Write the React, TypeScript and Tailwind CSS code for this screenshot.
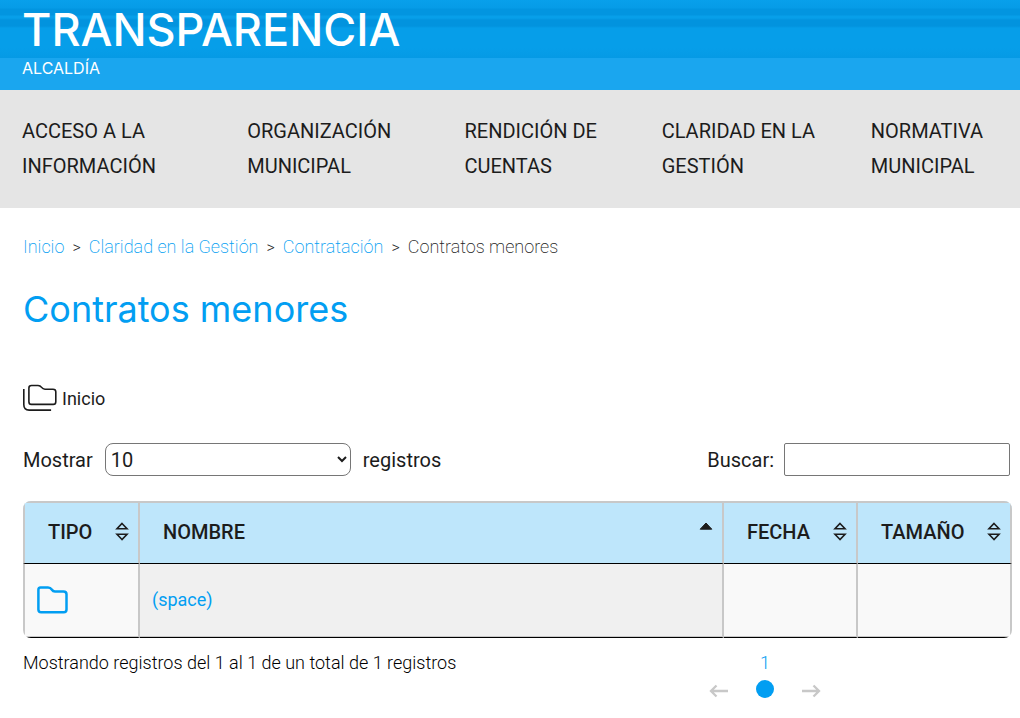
import type { ReactNode } from "react";

const NAV_ITEMS = [
  ["Acceso a la", "información"],
  ["Organización", "municipal"],
  ["Rendición de", "cuentas"],
  ["Claridad en la", "gestión"],
  ["Normativa", "municipal"],
];

const BREADCRUMBS = ["Inicio", "Claridad en la Gestión", "Contratación"];

function FolderIcon() {
  return (
    <svg width="31" height="28" viewBox="0 0 31 28" fill="none" stroke="#029ef2" strokeWidth="2.5">
      <path d="M3.500 1.500h7.500c2 0 2.800.6 3.700 2s1.800 2 3.300 2h8.500c2 0 3 1 3 2.800v15.200c0 1.800-1 2.800-2.800 2.800H4.200c-1.800 0-2.800-1-2.800-2.800V3.800c0-1.500.8-2.300 2.100-2.300z" />
    </svg>
  );
}

function FoldersIcon() {
  return (
    <svg width="35" height="28" viewBox="0 0 35 28" fill="none" stroke="#1c1c1c" strokeWidth="1.6">
      <path d="M8.500 1.500h6.500c2 0 2.600.5 3.600 1.900s1.800 1.800 3.400 1.800h8c1.800 0 2.800 1 2.800 2.600v9.900c0 1.800-1 2.700-2.600 2.700H8.400c-1.700 0-2.500-1-2.500-2.700V4c0-1.600 1-2.500 2.600-2.500z" />
      <path d="M.8 5v15.500c0 3.500 2 5.600 5.300 5.600h22" />
    </svg>
  );
}

function SortIcon({ active = false }: { active?: boolean }) {
  return (
    <svg width="16" height="20" viewBox="0 0 16 20" fill="none" stroke="#1c1c1c" strokeWidth="1.6">
      {active ? (
        <path d="M8 1L13.800 7.200H2.200z" fill="#1c1c1c" strokeWidth="1" />
      ) : (
        <>
          <path d="M8 1.500L13 6.700H3z" />
          <path d="M8 17.500L3 12.300h10z" />
        </>
      )}
    </svg>
  );
}

function ArrowIcon({ flip = false }: { flip?: boolean }) {
  return (
    <svg
      width="20"
      height="14"
      viewBox="0 0 20 14"
      fill="none"
      stroke="#c8c8c8"
      strokeWidth="2.3"
      className={flip ? "rotate-180" : ""}
    >
      <path d="M7.500 1.500L2 7l5.500 5.500M2 7h17" />
    </svg>
  );
}

function HeaderCell({ children, active }: { children: ReactNode; active?: boolean }) {
  return (
    <th
      scope="col"
      aria-sort={active ? "ascending" : "none"}
      className="h-[63px] border-t-2 border-r-2 border-b border-t-[#c8c8c8] border-r-[#c8c8c8] border-b-black bg-[#bee6fb] p-0 first:border-l-2 first:border-l-[#c8c8c8]"
    >
      <button className="flex w-full items-center justify-between pr-2 pb-[2px] pl-[23px] text-xl font-medium uppercase">
        {children}
        <SortIcon active={active} />
      </button>
    </th>
  );
}

export default function App() {
  return (
    <div className="min-h-screen bg-white font-['Roboto',sans-serif] text-[#1c1c1c]">
      {/* Header */}
      <header className="font-['Inter',sans-serif] text-white">
        <div className="bg-[linear-gradient(to_bottom,#08a0eb_0px,#069ce7_8px,#0295e0_9px,#0295e0_15px,#079fe9_16px,#079fe9_18px,#0293de_20px,#0293de_26px,#069ee9_28px,#069ee9_48px,#059ae5_58px)] px-[22px] pt-1 pb-[2px]">
          <h1 className="text-[45px] leading-[52px] font-medium">TRANSPARENCIA</h1>
        </div>
        <p className="bg-[#1aa6ef] px-[22px] pb-3 text-base leading-5">ALCALDÍA</p>
      </header>

      {/* Navigation */}
      <nav className="bg-[#e5e5e5] pt-6 pb-6 pl-[22px]">
        <ul className="grid grid-cols-[225fr_217fr_197fr_209fr_149fr] text-xl leading-[35px]">
          {NAV_ITEMS.map(([first, second]) => (
            <li key={first}>
              <a href="#" className="block uppercase">
                {first}
                <br />
                {second}
              </a>
            </li>
          ))}
        </ul>
      </nav>

      <main className="pr-2 pl-[23px]">
        {/* Breadcrumbs */}
        <nav aria-label="Breadcrumb" className="pt-[26px]">
          <ol className="flex text-lg leading-[26px] font-extralight">
            {BREADCRUMBS.map((name) => (
              <li key={name}>
                <a href="#" className="text-[#029ef2]">
                  {name}
                </a>
                <span className="px-2 text-base font-light">&gt;</span>
              </li>
            ))}
            <li>Contratos menores</li>
          </ol>
        </nav>

        <h2 className="mt-6 font-['Inter',sans-serif] text-[36px] leading-[50px] font-normal text-[#029ef2]">
          Contratos menores
        </h2>

        {/* Current folder */}
        <a href="#" className="mt-[50px] flex w-fit items-end gap-1 text-lg leading-[26px]">
          <FoldersIcon />
          Inicio
        </a>

        {/* Table controls */}
        <div className="mt-[31px] flex items-center justify-between pr-[2px] text-xl">
          <label className="flex items-center gap-3">
            Mostrar
            <select className="h-[33px] w-[246px] rounded-lg border border-[#767676] bg-white px-[1px]">
              <option>10</option>
              <option>25</option>
              <option>50</option>
              <option>100</option>
            </select>
            registros
          </label>
          <label className="flex items-center gap-[10px]">
            Buscar:
            <input type="search" className="h-[33px] w-[226px] rounded-[2px] border border-[#767676] px-2" />
          </label>
        </div>

        {/* Files */}
        <table className="mt-[25px] w-full table-fixed border-separate border-spacing-0 overflow-hidden rounded-lg text-left">
          <colgroup>
            <col className="w-[117px]" />
            <col />
            <col className="w-[134px]" />
            <col className="w-[154px]" />
          </colgroup>
          <thead>
            <tr>
              <HeaderCell>Tipo</HeaderCell>
              <HeaderCell active>Nombre</HeaderCell>
              <HeaderCell>Fecha</HeaderCell>
              <HeaderCell>Tamaño</HeaderCell>
            </tr>
          </thead>
          <tbody className="text-lg [&_td]:h-[74px] [&_td]:border-r-2 [&_td]:border-b [&_td]:border-r-[#c8c8c8] [&_td]:border-b-black [&_td]:pb-[2px] [&_td]:shadow-[inset_0_-1px_0_#c8c8c8]">
            <tr>
              <td className="border-l-2 border-l-[#c8c8c8] bg-[#f9f9f9] px-3">
                <FolderIcon />
              </td>
              <td className="bg-[#f0f0f0] px-3">
                <a href="#" className="text-[#029ef2]">
                  (space)
                </a>
              </td>
              <td className="bg-[#f9f9f9]" />
              <td className="bg-[#f9f9f9]" />
            </tr>
          </tbody>
        </table>

        {/* Pagination */}
        <div className="flex items-start justify-between pt-3 pr-[191px] text-lg leading-[26px] font-light">
          <p className="text-black">Mostrando registros del 1 al 1 de un total de 1 registros</p>
          <div className="grid grid-cols-[20px_18px_20px] justify-items-center gap-x-[27px]">
            <button aria-label="Anterior" disabled className="col-start-1 row-start-2 self-end">
              <ArrowIcon />
            </button>
            <a href="#" className="col-start-2 row-span-2 row-start-1 flex flex-col items-center gap-1 text-[#029ef2]">
              1
              <span className="size-[18px] rounded-full bg-[#029ef2]" />
            </a>
            <button aria-label="Siguiente" disabled className="col-start-3 row-start-2 self-end">
              <ArrowIcon flip />
            </button>
          </div>
        </div>
      </main>
    </div>
  );
}
